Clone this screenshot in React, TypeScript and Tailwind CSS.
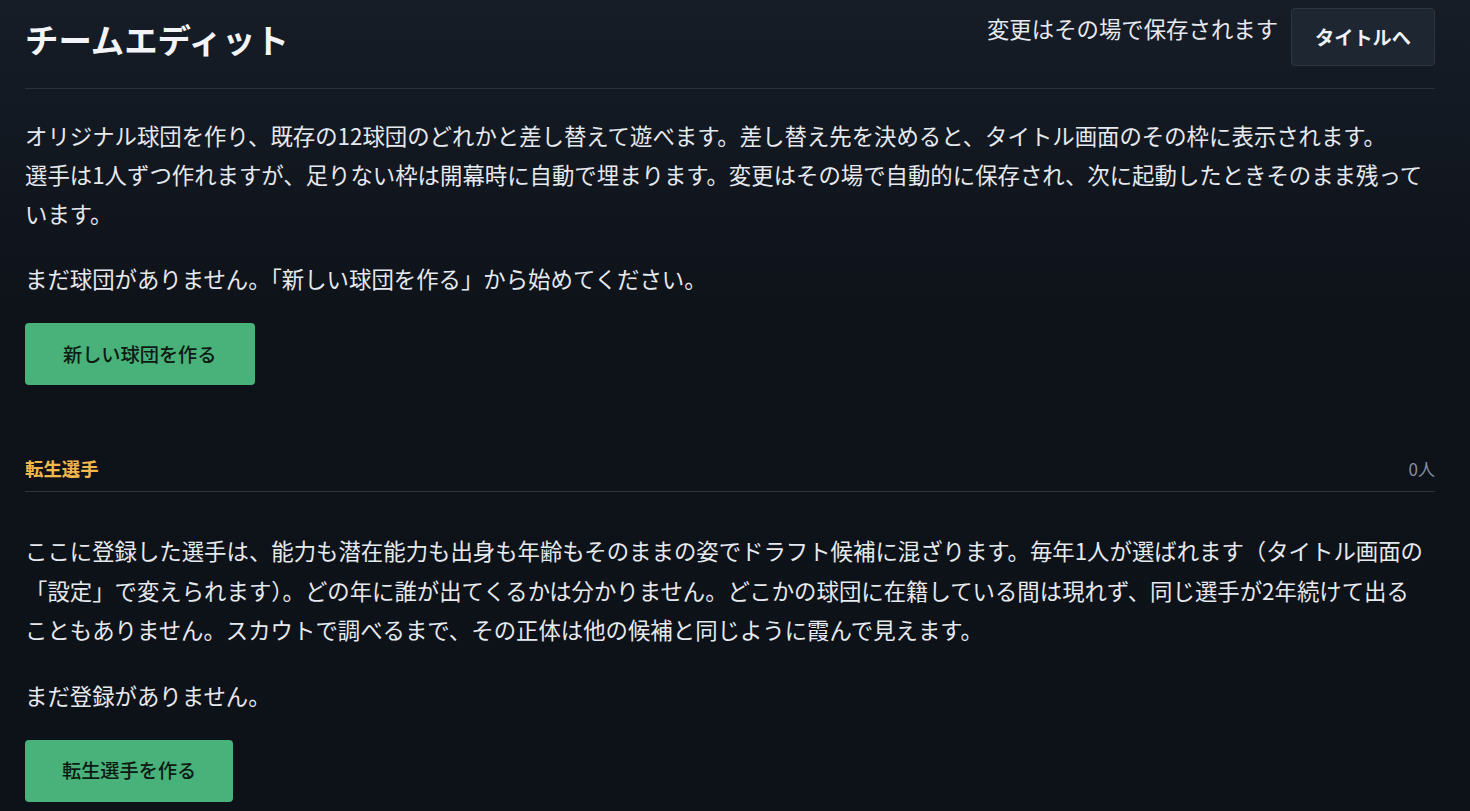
export default function App() {
  return (
    <div
      className="min-h-screen bg-[linear-gradient(180deg,#161d27_0px,#0e1219_320px,#0d1118_100%)] text-[#e6e9ee] pl-[25px] pr-[35px]"
      style={{ fontFamily: '"Noto Sans CJK JP", "Noto Sans", sans-serif' }}
    >
      <header className="flex items-start justify-between pt-2 pb-[22px] border-b border-[#2a313b]">
        <h1 className="mt-[12px] text-[33.4px] leading-[38px] font-bold text-[#f2f4f7]">チームエディット</h1>
        <div className="flex items-start gap-[13px]">
          <span className="mt-[3px] text-[22.4px] leading-[34px]">変更はその場で保存されます</span>
          <button className="h-[58px] px-[23px] rounded-[4px] border border-[#2c3542] bg-[#1d2631] text-[19.2px] font-bold text-[#eef1f5]">
            タイトルへ
          </button>
        </div>
      </header>

      <section className="pt-[27px]">
        <p className="text-[22.4px] leading-[39px]">
          オリジナル球団を作り、既存の12球団のどれかと差し替えて遊べます。差し替え先を決めると、タイトル画面のその枠に表示されます。
          <br />
          選手は1人ずつ作れますが、足りない枠は開幕時に自動で埋まります。変更はその場で自動的に保存され、次に起動したときそのまま残っています。
        </p>
        <p className="mt-[26px] text-[22.4px] leading-[39px]">まだ球団がありません。「新しい球団を作る」から始めてください。</p>
        <button className="mt-[25px] h-[62px] px-[38px] rounded-[4px] bg-[#48b27a] text-[19.2px] font-medium text-[#0d1a12]">
          新しい球団を作る
        </button>
      </section>

      <section className="mt-[69px]">
        <div className="flex items-end justify-between pb-[9px] border-b border-[#2e3541]">
          <h2 className="text-[18.4px] leading-[28px] font-bold text-[#f2b84b]">転生選手</h2>
          <span className="text-[17px] leading-[26px] text-[#8390a3]">0人</span>
        </div>
        <p className="mt-[39px] text-[22.4px] leading-[39.5px]">
          ここに登録した選手は、能力も潜在能力も出身も年齢もそのままの姿でドラフト候補に混ざります。毎年1人が選ばれます（タイトル画面の「設定」で変えられます）。どの年に誰が出てくるかは分かりません。どこかの球団に在籍している間は現れず、同じ選手が2年続けて出る
          <span className="whitespace-nowrap">こと</span>
          もありません。スカウトで調べるまで、その正体は他の候補と同じように霞んで見えます。
        </p>
        <p className="mt-[26px] text-[22.4px] leading-[39px]">まだ登録がありません。</p>
        <button className="mt-[25px] mb-[10px] h-[62px] px-[37px] rounded-[4px] bg-[#48b27a] text-[19.2px] font-medium text-[#0d1a12]">
          転生選手を作る
        </button>
      </section>
    </div>
  );
}
